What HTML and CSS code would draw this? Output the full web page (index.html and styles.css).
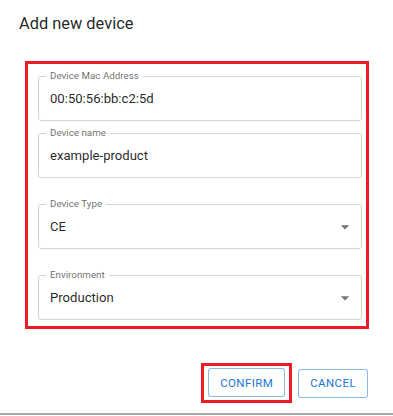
FILE: index.html
```html
<!DOCTYPE html>
<html lang="en">
<head>
    <meta charset="UTF-8">
    <meta name="viewport" content="width=device-width, initial-scale=1.0">
    <title>Add new device</title>
    <link rel="stylesheet" href="styles.css">
</head>
<body>
    <div class="dialog">
        <h2 class="dialog-title">Add new device</h2>

        <!-- Form fields -->
        <div class="device-form highlight">
            <div class="field">
                <label class="field-label">Device Mac Address</label>
                <span class="field-value">00:50:56:bb:c2:5d</span>
            </div>
            <div class="field">
                <label class="field-label">Device name</label>
                <span class="field-value">example-product</span>
            </div>
            <div class="field select">
                <label class="field-label">Device Type</label>
                <span class="field-value">CE</span>
                <svg class="select-arrow" viewBox="0 0 24 24" width="20" height="20"><path d="M7 10l5 5 5-5z"/></svg>
            </div>
            <div class="field select">
                <label class="field-label">Environment</label>
                <span class="field-value">Production</span>
                <svg class="select-arrow" viewBox="0 0 24 24" width="20" height="20"><path d="M7 10l5 5 5-5z"/></svg>
            </div>
        </div>

        <!-- Actions -->
        <div class="dialog-actions">
            <div class="highlight highlight-btn">
                <button class="btn">Confirm</button>
            </div>
            <button class="btn">Cancel</button>
        </div>
    </div>
</body>
</html>
```
FILE: styles.css
```css
html, body {
    margin: 0;
    padding: 0;
    background-color: #fff;
    font-family: Roboto, "Liberation Sans", sans-serif;
    color: rgba(0, 0, 0, 0.87);
}

.dialog {
    height: 413px;
    border-bottom: 2px solid #a8a8a8;
}

.dialog-title {
    margin: 0;
    padding: 11px 20px 0 19px;
    font-size: 16.4px;
    font-weight: 400;
    line-height: 26px;
}

/* Red annotation boxes */
.highlight {
    border: 3px solid #ed1c24;
}

.device-form {
    box-sizing: border-box;
    width: 344px;
    margin: 24px 0 0 25px;
    padding: 12px 4px 6px 10px;
}

.field {
    position: relative;
    box-sizing: border-box;
    height: 45px;
    display: flex;
    align-items: center;
    padding: 0 6px 0 11px;
    border: 1px solid #d4d4d4;
    border-radius: 3px;
}

.field + .field {
    margin-top: 12px;
}

.field.select {
    margin-top: 26px;
}

.field-label {
    position: absolute;
    top: -7px;
    left: 7px;
    padding: 0 4px;
    background-color: #fff;
    font-size: 9.8px;
    line-height: 12px;
    color: rgba(0, 0, 0, 0.6);
}

.field-value {
    font-size: 13.1px;
}

.select-arrow {
    margin-left: auto;
    fill: rgba(0, 0, 0, 0.54);
}

.dialog-actions {
    display: flex;
    justify-content: flex-end;
    align-items: center;
    gap: 6px;
    margin-top: 34px;
    padding-right: 25px;
}

.highlight-btn {
    padding: 2px 4px 3px 4px;
}

.btn {
    display: block;
    box-sizing: border-box;
    height: 29px;
    padding: 0 11px;
    border: 1px solid rgba(25, 118, 210, 0.5);
    border-radius: 3px;
    background-color: #fff;
    color: #1976d2;
    font-family: Roboto, "Liberation Sans", sans-serif;
    font-size: 11.5px;
    font-weight: 400;
    letter-spacing: 0.4px;
    text-transform: uppercase;
}
```
